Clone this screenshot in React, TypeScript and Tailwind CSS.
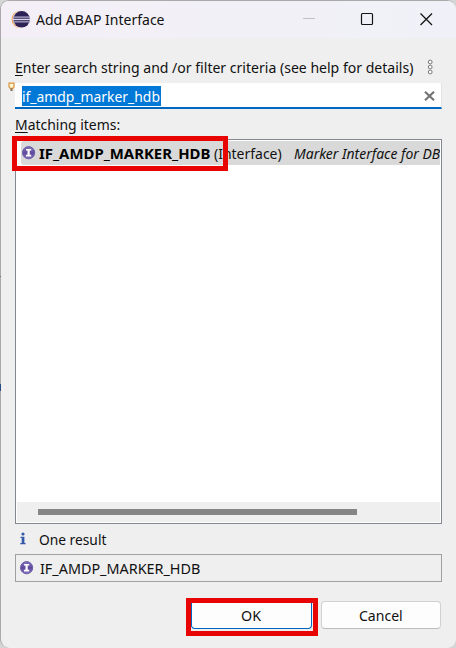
import { useLayoutEffect, useRef, useState, type ReactNode } from "react";

/* One line of text, condensed horizontally so that it fills its box. */
function Line({ box, className = "", children }: { box: string; className?: string; children: ReactNode }) {
  const ref = useRef<HTMLSpanElement>(null);
  const [scale, setScale] = useState(1);
  useLayoutEffect(() => {
    const el = ref.current;
    if (el && el.parentElement) setScale(el.parentElement.clientWidth / el.offsetWidth);
  }, []);
  return (
    <span className={`block h-5 shrink-0 leading-5 ${box}`}>
      <span
        ref={ref}
        className={`inline-block origin-left whitespace-pre leading-5 ${className}`}
        style={{ transform: `scaleX(${scale})` }}
      >
        {children}
      </span>
    </span>
  );
}

function EclipseIcon() {
  return (
    <svg className="h-[19px] w-5 shrink-0" viewBox="0 0 20 19">
      <circle cx="9.2" cy="10.3" r="8.6" fill="#f59a3c" />
      <circle cx="10.4" cy="10.3" r="8.8" fill="#f4eff6" />
      <circle cx="10.6" cy="10.3" r="8.3" fill="#2c2255" />
      <rect x="2" y="7.4" width="17" height="1.4" fill="#aaa3c6" />
      <rect x="1.6" y="9.7" width="17.6" height="1.5" fill="#d9d5e6" />
      <rect x="2" y="12.2" width="17" height="1.3" fill="#aaa3c6" />
    </svg>
  );
}

function InterfaceIcon() {
  return (
    <svg className="h-[14px] w-[14px] shrink-0" viewBox="0 0 14 14">
      <defs>
        <linearGradient id="orb" x1="0" y1="0" x2="0" y2="1">
          <stop offset="0" stopColor="#8577bd" />
          <stop offset="0.5" stopColor="#604a9e" />
          <stop offset="1" stopColor="#8272bd" />
        </linearGradient>
      </defs>
      <circle cx="6.6" cy="6.7" r="6.1" fill="url(#orb)" stroke="#6552a3" strokeWidth="0.9" />
      <path d="M4 3H9.2V4.6H7.7V8.8H9.2V10.4H4V8.8H5.5V4.6H4Z" fill="#fff" />
    </svg>
  );
}

export default function App() {
  return (
    <div className="relative h-[648px] w-[456px] overflow-hidden bg-[#d5d5d5] font-['Noto_Sans','Open_Sans',sans-serif] text-[15px] text-[#111]">
      <div className="flex h-[648px] w-full flex-col overflow-hidden rounded-[9px] border-l border-t border-[#aaa] bg-[#efefef]">
        <header className="flex h-[37px] shrink-0 items-start bg-gradient-to-r from-[#f4eff6] to-[#f0f1f8] pl-[10px] pt-2">
          <EclipseIcon />
          <Line box="ml-[5px] w-[129px]">Add ABAP Interface</Line>
          <svg className="-mt-px ml-[138px] h-5 w-[130px]" viewBox="0 0 130 20" fill="none">
            <path d="M0 10.5H12" stroke="#c2bfc8" />
            <rect x="58.5" y="5.5" width="11" height="11" rx="1" stroke="#151515" strokeWidth="1.2" />
            <path d="M117.5 5.5L129 17M129 5.5L117.5 17" stroke="#151515" strokeWidth="1.3" />
          </svg>
        </header>

        <main className="flex flex-col pl-[14px]">
          <div className="mt-[19px] flex">
            <Line box="w-[398px]">
              <u className="underline decoration-1 underline-offset-2">E</u>nter search string and /or filter criteria (see help for details)
            </Line>
            <svg className="ml-[14px] mt-[2px] h-4 w-[7px]" viewBox="0 0 7 16" fill="#fff" stroke="#777" strokeWidth="1">
              <circle cx="3.2" cy="3" r="1.9" />
              <circle cx="3.2" cy="8" r="1.9" />
              <circle cx="3.2" cy="13" r="1.9" />
            </svg>
          </div>

          <div className="mt-[6px] flex h-[26px] w-[427px] items-start border-b-2 border-r border-b-[#0067c0] border-r-[#e2e2e2] bg-white pl-[7px] pt-[3px]">
            <span className="flex h-5 w-[139px] bg-[#0078d7] text-white">
              <Line box="w-[138px]">if_amdp_marker_hdb</Line>
            </span>
            <svg className="ml-auto mr-[6px] mt-[5px] h-[10px] w-[11px]" viewBox="0 0 11 10">
              <path d="M1 .8L10 9.2M10 .8L1 9.2" stroke="#737373" strokeWidth="2.2" />
            </svg>
          </div>

          <div className="mt-[5px]">
            <Line box="w-[105px]">
              <u className="underline decoration-1 underline-offset-2">M</u>atching items:
            </Line>
          </div>

          <section className="mt-[5px] flex h-[385px] w-[427px] flex-col border border-[#828790] bg-white p-px">
            <div className="ml-[4px] flex h-6 items-start overflow-hidden rounded-l-[3px] bg-[#d9d9d9]">
              <div className="ml-[1px] mt-[5px]">
                <InterfaceIcon />
              </div>
              <div className="mt-[2px] flex">
                <Line box="ml-[3px] w-[171px]" className="font-bold text-black">IF_AMDP_MARKER_HDB</Line>
                <Line box="ml-[4px] w-[68px]">(Interface)</Line>
                <Line box="ml-[12px] w-[146px]" className="italic">Marker Interface for DB</Line>
              </div>
            </div>
            <div className="mt-auto flex h-5 items-center bg-[#efefef] pl-[21px]">
              <div className="h-[6px] w-[319px] bg-[#858585]" />
            </div>
          </section>

          <div className="mt-[5px] flex">
            <svg className="ml-[5px] mt-[3px] h-[13px] w-[6px]" viewBox="0 0 6 13" fill="#3459a8">
              <circle cx="3" cy="2" r="1.6" />
              <path d="M.5 4.7H4.4V11H5.6V12.3H.3V11H1.7V6H.5Z" />
            </svg>
            <Line box="ml-[13px] w-[67px]">One result</Line>
          </div>

          <div className="mt-[5px] flex h-[28px] w-[427px] items-start border border-[#a0a0a0] pl-[4px] pt-[3px]">
            <div className="mt-[3px]">
              <InterfaceIcon />
            </div>
            <Line box="ml-[6px] w-[160px]">IF_AMDP_MARKER_HDB</Line>
          </div>

          <footer className="mt-[16px] flex pl-[171px]">
            <div className="h-[38px] w-[132px] border-[5px] border-[#e90404]">
              <div className="flex h-[26px] w-[121px] items-start justify-center rounded-b-[4px] border border-t-0 border-[#0067c0] bg-[#fdfdfd] pr-[2px] pt-[2px]">
                <Line box="w-[20px]">OK</Line>
              </div>
            </div>
            <div className="ml-[3px] mt-[3px] flex h-7 w-[120px] items-start justify-center rounded-[4px] border border-[#d0d0d0] border-b-[#bcbcbc] bg-[#fdfdfd] pt-[3px]">
              <Line box="w-[44px]">Cancel</Line>
            </div>
          </footer>
        </main>
      </div>

      {/* Annotation frame and hint marker lying over the dialog */}
      <div className="absolute left-[12px] top-[136px] h-[35px] w-[216px] border-[5px] border-[#e90404]" />
      <svg className="absolute left-[8px] top-[82px] h-[10px] w-[7px]" viewBox="0 0 7 10">
        <path d="M1 1.2H6V4.8L4.8 6.4H2.2L1 4.8Z" fill="#fff3d0" stroke="#d9953f" strokeWidth="1.2" />
        <path d="M2.4 6.4H4.6V9H2.4Z" fill="#8a7560" />
      </svg>
      <div className="absolute left-0 top-[276px] h-px w-px bg-[#6a6d84]" />
      <div className="absolute left-0 top-[384px] h-[7px] w-px bg-[#284b80]" />
    </div>
  );
}
